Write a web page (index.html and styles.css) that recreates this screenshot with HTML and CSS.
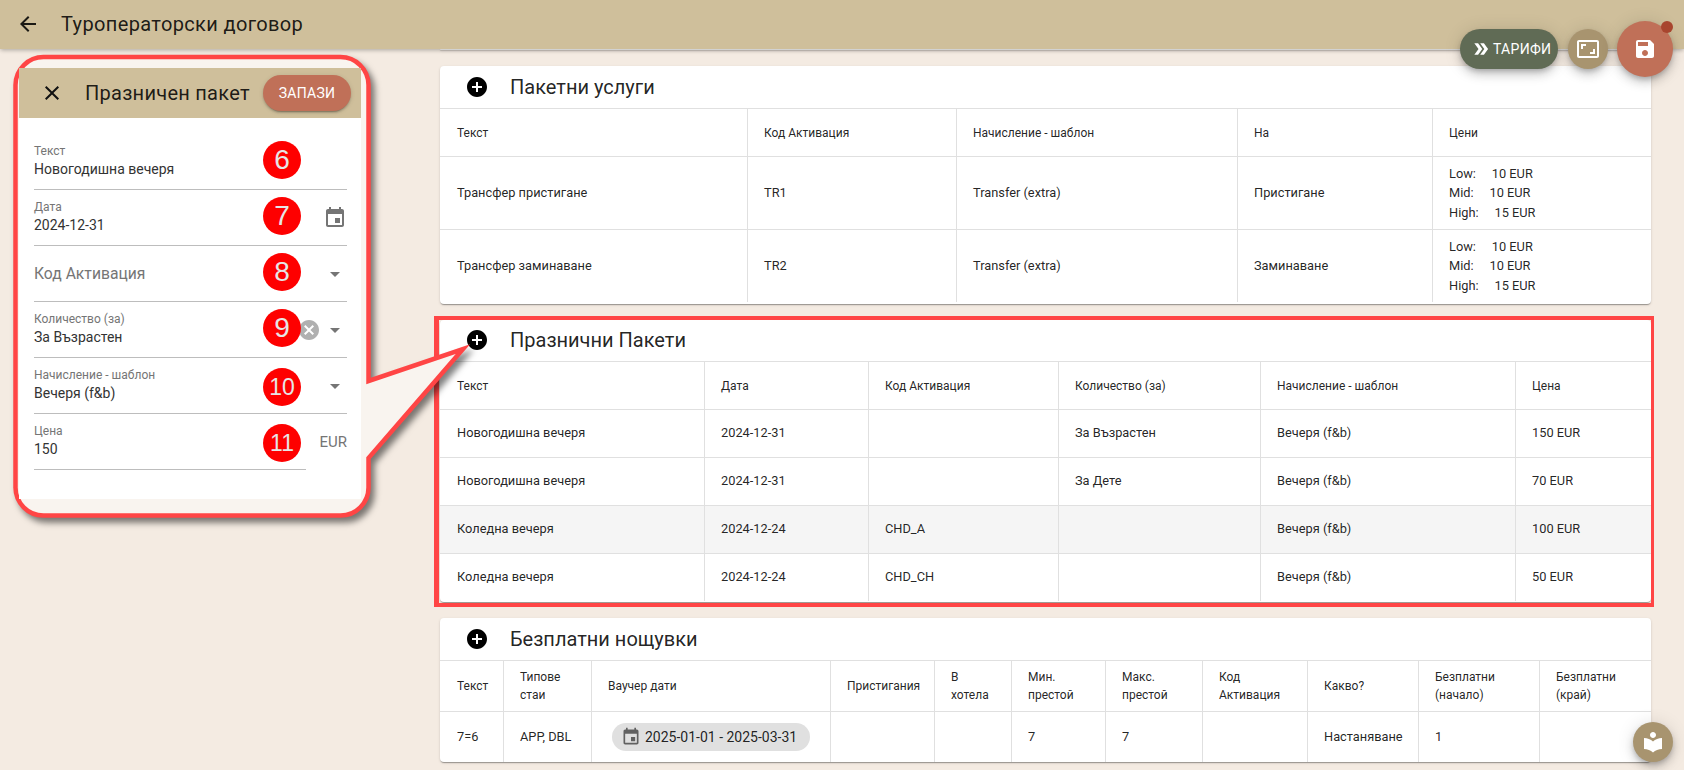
FILE: index.html
```html
<!DOCTYPE html>
<html lang="bg">
<head>
<meta charset="utf-8">
<title>Туроператорски договор</title>
<link rel="stylesheet" href="styles.css">
</head>
<body>
<div class="page">
  <header class="toolbar">
    <svg class="icon toolbar-back" viewBox="0 0 24 24"><path d="M20 11H7.83l5.59-5.59L12 4l-8 8 8 8 1.41-1.41L7.83 13H20v-2z"/></svg>
    <h1 class="toolbar-title">Туроператорски договор</h1>
  </header>

  <main class="content">
    <section class="card card-sliver"></section>

    <section class="card card-packages">
      <div class="card-head">
        <svg class="icon add" viewBox="0 0 24 24"><path d="M12 2C6.48 2 2 6.48 2 12s4.48 10 10 10 10-4.48 10-10S17.52 2 12 2zm5 11h-4v4h-2v-4H7v-2h4V7h2v4h4v2z"/></svg>
        <h2 class="card-title">Пакетни услуги</h2>
      </div>
      <table class="grid">
        <colgroup><col class="w307"><col class="w209"><col class="w281"><col class="w195"><col class="w219"></colgroup>
        <tr class="row-48 row-head"><td>Текст</td><td>Код Активация</td><td>Начисление - шаблон</td><td>На</td><td>Цени</td></tr>
        <tr class="row-73"><td>Трансфер пристигане</td><td>TR1</td><td>Transfer (extra)</td><td>Пристигане</td>
          <td class="prices">Low:&nbsp;&nbsp;&nbsp;&nbsp;&nbsp;10 EUR<br>Mid:&nbsp;&nbsp;&nbsp;&nbsp;&nbsp;10 EUR<br>High:&nbsp;&nbsp;&nbsp;&nbsp;&nbsp;15 EUR</td></tr>
        <tr class="row-73"><td>Трансфер заминаване</td><td>TR2</td><td>Transfer (extra)</td><td>Заминаване</td>
          <td class="prices">Low:&nbsp;&nbsp;&nbsp;&nbsp;&nbsp;10 EUR<br>Mid:&nbsp;&nbsp;&nbsp;&nbsp;&nbsp;10 EUR<br>High:&nbsp;&nbsp;&nbsp;&nbsp;&nbsp;15 EUR</td></tr>
      </table>
    </section>

    <section class="card card-holiday">
      <div class="card-head card-head-tight">
        <svg class="icon add" viewBox="0 0 24 24"><path d="M12 2C6.48 2 2 6.48 2 12s4.48 10 10 10 10-4.48 10-10S17.52 2 12 2zm5 11h-4v4h-2v-4H7v-2h4V7h2v4h4v2z"/></svg>
        <h2 class="card-title">Празнични Пакети</h2>
      </div>
      <table class="grid">
        <colgroup><col class="w264"><col class="w164"><col class="w190"><col class="w202"><col class="w255"><col class="w136"></colgroup>
        <tr class="row-48 row-head"><td>Текст</td><td>Дата</td><td>Код Активация</td><td>Количество (за)</td><td>Начисление - шаблон</td><td>Цена</td></tr>
        <tr class="row-48 row-data"><td>Новогодишна вечеря</td><td>2024-12-31</td><td></td><td>За Възрастен</td><td>Вечеря (f&amp;b)</td><td>150 EUR</td></tr>
        <tr class="row-48 row-data"><td>Новогодишна вечеря</td><td>2024-12-31</td><td></td><td>За Дете</td><td>Вечеря (f&amp;b)</td><td>70 EUR</td></tr>
        <tr class="row-48 row-data row-hover"><td>Коледна вечеря</td><td>2024-12-24</td><td>CHD_A</td><td></td><td>Вечеря (f&amp;b)</td><td>100 EUR</td></tr>
        <tr class="row-48 row-data"><td>Коледна вечеря</td><td>2024-12-24</td><td>CHD_CH</td><td></td><td>Вечеря (f&amp;b)</td><td>50 EUR</td></tr>
      </table>
    </section>

    <section class="card card-free">
      <div class="card-head">
        <svg class="icon add" viewBox="0 0 24 24"><path d="M12 2C6.48 2 2 6.48 2 12s4.48 10 10 10 10-4.48 10-10S17.52 2 12 2zm5 11h-4v4h-2v-4H7v-2h4V7h2v4h4v2z"/></svg>
        <h2 class="card-title">Безплатни нощувки</h2>
      </div>
      <table class="grid">
        <colgroup><col class="w63"><col class="w88"><col class="w239"><col class="w104"><col class="w77"><col class="w94"><col class="w97"><col class="w105"><col class="w111"><col class="w121"><col class="w112"></colgroup>
        <tr class="row-51 row-head"><td>Текст</td><td>Типове стаи</td><td>Ваучер дати</td><td>Пристигания</td><td>В хотела</td><td>Мин. престой</td><td>Макс. престой</td><td>Код Активация</td><td>Какво?</td><td>Безплатни (начало)</td><td>Безплатни (край)</td></tr>
        <tr class="row-51"><td>7=6</td><td>APP, DBL</td>
          <td><span class="chip"><svg class="icon chip-icon" viewBox="0 0 24 24"><path d="M17 12h-5v5h5v-5zM16 1v2H8V1H6v2H5c-1.11 0-1.99.9-1.99 2L3 19c0 1.1.89 2 2 2h14c1.1 0 2-.9 2-2V5c0-1.1-.9-2-2-2h-1V1h-2zm3 18H5V8h14v11z"/></svg>2025-01-01 - 2025-03-31</span></td>
          <td></td><td></td><td>7</td><td>7</td><td></td><td>Настаняване</td><td>1</td><td></td></tr>
      </table>
    </section>
  </main>

  <div class="fab-tariffs">
    <svg class="icon fab-tariffs-icon" viewBox="0 0 24 24"><path d="M15.5 5H11l5 7-5 7h4.5l5-7z"/><path d="M8.5 5H4l5 7-5 7h4.5l5-7z"/></svg>
    <span>ТАРИФИ</span>
  </div>
  <div class="fab-ratio">
    <svg class="icon fab-ratio-icon" viewBox="0 0 24 24"><path d="M19 12h-2v3h-3v2h5v-5zM7 9h3V7H5v5h2V9zm14-6H3c-1.1 0-2 .9-2 2v14c0 1.1.9 2 2 2h18c1.1 0 2-.9 2-2V5c0-1.1-.9-2-2-2zm0 16.01H3V4.99h18v14.02z"/></svg>
  </div>
  <div class="fab-save">
    <svg class="icon fab-save-icon" viewBox="0 0 24 24"><path d="M17 3H5c-1.11 0-2 .9-2 2v14c0 1.1.89 2 2 2h14c1.1 0 2-.9 2-2V7l-4-4zm-5 16c-1.66 0-3-1.34-3-3s1.34-3 3-3 3 1.34 3 3-1.34 3-3 3zm3-10H5V5h10v4z"/></svg>
    <span class="fab-dot"></span>
  </div>
  <div class="fab-help">
    <svg class="icon fab-help-icon" viewBox="0 0 24 24"><path d="M12 11.55C9.64 9.35 6.48 8 3 8v11c3.48 0 6.64 1.35 9 3.55 2.36-2.19 5.52-3.55 9-3.55V8c-3.48 0-6.64 1.35-9 3.55zM12 8c1.66 0 3-1.34 3-3s-1.34-3-3-3-3 1.34-3 3 1.34 3 3 3z"/></svg>
  </div>

  <svg class="bubble" viewBox="0 0 490 540">
    <path class="bubble-shape" d="M44 57H340a28 28 0 0 1 28.5 28V381L463 349L368.5 458V487a28 28 0 0 1-28.5 28.5H44A28 28 0 0 1 15.5 487V85A28 28 0 0 1 44 57Z"/>
  </svg>

  <aside class="panel">
    <div class="panel-head">
      <svg class="icon panel-close" viewBox="0 0 24 24"><path d="M19 6.41L17.59 5 12 10.59 6.41 5 5 6.41 10.59 12 5 17.59 6.41 19 12 13.41 17.59 19 19 17.59 13.41 12z"/></svg>
      <h2 class="panel-title">Празничен пакет</h2>
      <span class="panel-save">ЗАПАЗИ</span>
    </div>
    <div class="panel-body">
      <div class="field">
        <div class="field-text"><span class="field-label">Текст</span><span class="field-value">Новогодишна вечеря</span></div>
        <span class="badge">6</span>
      </div>
      <div class="field">
        <div class="field-text"><span class="field-label">Дата</span><span class="field-value">2024-12-31</span></div>
        <svg class="icon field-date" viewBox="0 0 24 24"><path d="M17 12h-5v5h5v-5zM16 1v2H8V1H6v2H5c-1.11 0-1.99.9-1.99 2L3 19c0 1.1.89 2 2 2h14c1.1 0 2-.9 2-2V5c0-1.1-.9-2-2-2h-1V1h-2zm3 18H5V8h14v11z"/></svg>
        <span class="badge">7</span>
      </div>
      <div class="field">
        <div class="field-placeholder">Код Активация</div>
        <div class="field-actions"><span class="caret"></span></div>
        <span class="badge">8</span>
      </div>
      <div class="field">
        <div class="field-text"><span class="field-label">Количество (за)</span><span class="field-value">За Възрастен</span></div>
        <div class="field-actions">
          <svg class="icon field-clear" viewBox="0 0 24 24"><path d="M12 2C6.47 2 2 6.47 2 12s4.47 10 10 10 10-4.47 10-10S17.53 2 12 2zm5 13.59L15.59 17 12 13.41 8.41 17 7 15.59 10.59 12 7 8.41 8.41 7 12 10.59 15.59 7 17 8.41 13.41 12 17 15.59z"/></svg>
          <span class="caret"></span>
        </div>
        <span class="badge">9</span>
      </div>
      <div class="field">
        <div class="field-text"><span class="field-label">Начисление - шаблон</span><span class="field-value">Вечеря (f&amp;b)</span></div>
        <div class="field-actions"><span class="caret"></span></div>
        <span class="badge badge-low badge-two">10</span>
      </div>
      <div class="field-row">
        <div class="field field-short">
          <div class="field-text"><span class="field-label">Цена</span><span class="field-value">150</span></div>
          <span class="badge badge-low badge-two">11</span>
        </div>
        <span class="field-suffix">EUR</span>
      </div>
    </div>
  </aside>
</div>
</body>
</html>
```

FILE: styles.css
```css
* { box-sizing: border-box; }
html, body { margin: 0; padding: 0; height: 100%; }
body {
  background: #f4ebe2;
  font-family: Roboto, "Liberation Sans", sans-serif;
  color: rgba(0, 0, 0, .87);
  overflow: hidden;
}
h1, h2 { margin: 0; font-weight: 400; }
.icon { display: block; width: 24px; height: 24px; fill: currentColor; flex: none; }

.page { position: relative; width: 1684px; height: 770px; overflow: hidden; }

/* toolbar */
.toolbar {
  position: relative;
  z-index: 2;
  height: 49px;
  background: #cfbf9b;
  display: flex;
  align-items: center;
  padding: 0 0 2px 16px;
  box-shadow: 0 2px 4px -1px rgba(0,0,0,.2), 0 1px 5px rgba(0,0,0,.12);
}
.toolbar-back { margin-right: 21px; }
.toolbar-title { font-size: 20px; line-height: 24px; letter-spacing: .36px; color: rgba(0,0,0,.87); }

/* content */
.content {
  display: flex;
  flex-direction: column;
  gap: 16px;
  padding: 0 33px 0 440px;
}
.card {
  position: relative;
  background: #fff;
  border-radius: 4px;
  box-shadow: 0 2px 1px -1px rgba(0,0,0,.2), 0 1px 1px 0 rgba(0,0,0,.14), 0 1px 3px 0 rgba(0,0,0,.12);
}
.card-sliver { height: 1px; z-index: 1; border-radius: 0 0 4px 4px; }
.card-packages { padding-bottom: 2px; }
.card-holiday { padding-bottom: 1px; }
.card-holiday::after {
  content: "";
  position: absolute;
  top: -4px; left: -6px; right: -3px; bottom: -5px;
  border: solid #ff4545;
  border-width: 4px 3px 4px 5px;
  pointer-events: none;
}
.card-head {
  height: 42px;
  display: flex;
  align-items: center;
  padding-left: 25px;
}
.card-head-tight { height: 41px; padding-bottom: 2px; }
.add { color: #000; margin-right: 21px; }
.card-title { font-size: 20px; line-height: 24px; color: rgba(0,0,0,.87); }

/* tables */
.grid {
  width: 1211px;
  table-layout: fixed;
  border-collapse: separate;
  border-spacing: 0;
  font-size: 12.8px;
  line-height: 18px;
}
.grid td {
  padding: 0 16px;
  border-top: 1px solid #e0e0e0;
  border-left: 1px solid #e0e0e0;
  vertical-align: middle;
}
.grid td:first-child { border-left: 0; padding-left: 17px; }
.row-48 td { height: 48px; }
.row-51 td { height: 51px; }
.row-73 td { height: 73px; }
.grid .row-head td { font-size: 12px; }
.grid .row-data td { padding-bottom: 2px; }
.row-hover td { background: #f5f5f5; }
.grid .prices { line-height: 19.5px; }

.w63 { width: 63px; } .w77 { width: 77px; } .w88 { width: 88px; }
.w94 { width: 94px; } .w97 { width: 97px; } .w104 { width: 104px; }
.w105 { width: 105px; } .w111 { width: 111px; } .w112 { width: 112px; }
.w121 { width: 121px; } .w136 { width: 136px; } .w164 { width: 164px; }
.w190 { width: 190px; } .w195 { width: 195px; } .w202 { width: 202px; }
.w209 { width: 209px; } .w219 { width: 219px; } .w239 { width: 239px; }
.w255 { width: 255px; } .w264 { width: 264px; } .w281 { width: 281px; }
.w307 { width: 307px; }

.chip {
  display: inline-flex;
  align-items: center;
  height: 28px;
  margin-left: 4px;
  padding: 0 13px 0 9px;
  border-radius: 14px;
  background: #e0e0e0;
  font-size: 14px;
  white-space: nowrap;
}
.chip-icon { width: 20px; height: 20px; margin-right: 4px; color: #616161; }

/* floating buttons */
.fab-tariffs {
  position: absolute;
  z-index: 3;
  left: 1460px; top: 29px;
  width: 98px; height: 40px;
  border-radius: 20px;
  background: #606b55;
  color: #fff;
  display: flex;
  align-items: center;
  padding-left: 11px;
  font-size: 14px;
  letter-spacing: .3px;
  box-shadow: 0 3px 5px -1px rgba(0,0,0,.2), 0 6px 10px rgba(0,0,0,.14), 0 1px 18px rgba(0,0,0,.12);
}
.fab-tariffs-icon { width: 20px; height: 20px; margin-right: 2px; }
.fab-ratio, .fab-help {
  position: absolute;
  z-index: 3;
  width: 40px; height: 40px;
  border-radius: 50%;
  background: #a8946f;
  color: #fff;
  display: flex;
  align-items: center;
  justify-content: center;
  box-shadow: 0 3px 5px -1px rgba(0,0,0,.2), 0 6px 10px rgba(0,0,0,.14), 0 1px 18px rgba(0,0,0,.12);
}
.fab-ratio { left: 1568px; top: 29px; }
.fab-help { left: 1633px; top: 722px; }
.fab-save {
  position: absolute;
  z-index: 3;
  left: 1617px; top: 21px;
  width: 56px; height: 56px;
  border-radius: 50%;
  background: #c07058;
  color: #fff;
  display: flex;
  align-items: center;
  justify-content: center;
  box-shadow: 0 3px 5px -1px rgba(0,0,0,.2), 0 6px 10px rgba(0,0,0,.14), 0 1px 18px rgba(0,0,0,.12);
}
.fab-dot {
  position: absolute;
  top: 0; right: 0;
  width: 12px; height: 12px;
  border-radius: 50%;
  background: #a8452e;
}

/* annotation bubble */
.bubble {
  position: absolute;
  z-index: 4;
  left: 0; top: 0;
  width: 490px; height: 540px;
  filter: drop-shadow(4px 5px 3px rgba(0,0,0,.5));
}
.bubble-shape { fill: #f9f4ef; stroke: #ff4545; stroke-width: 4.5; stroke-linejoin: miter; }

/* panel inside the bubble */
.panel {
  position: absolute;
  z-index: 5;
  left: 19px; top: 68px;
  width: 342px;
}
.panel-head {
  height: 50px;
  background: #cfbf9b;
  display: flex;
  align-items: center;
  padding: 0 10px 0 21px;
}
.panel-close { margin-right: 21px; color: #111; }
.panel-title { font-size: 20px; line-height: 24px; letter-spacing: .27px; color: rgba(0,0,0,.87); }
.panel-save {
  margin-left: auto;
  width: 88px; height: 36px;
  border-radius: 18px;
  background: #c07058;
  color: #fff;
  font-size: 14px;
  letter-spacing: .3px;
  display: flex;
  align-items: center;
  justify-content: center;
  box-shadow: 0 3px 1px -2px rgba(0,0,0,.2), 0 2px 2px rgba(0,0,0,.14), 0 1px 5px rgba(0,0,0,.12);
}
.panel-body {
  height: 381px;
  background: #fff;
  padding: 16px 14px 0 15px;
}
.field {
  position: relative;
  height: 56px;
  display: flex;
  border-bottom: 1px solid #bdbdbd;
}
.field-text { display: flex; flex-direction: column; padding-top: 10px; flex: 1; }
.field-label { font-size: 12px; line-height: 14px; color: #757575; }
.field-value { margin-top: 2px; font-size: 14px; line-height: 18px; color: #333; }
.field-placeholder { flex: 1; font-size: 15.7px; line-height: 56px; color: #757575; }
.field-date { margin-top: 16px; color: #757575; }
.field-actions { display: flex; align-items: center; height: 56px; }
.field-clear { width: 24px; height: 24px; color: #b0b0b0; margin-right: 2px; }
.caret {
  width: 24px;
  height: 5px;
  position: relative;
}
.caret::after {
  content: "";
  position: absolute;
  left: 7px; top: 0;
  border-style: solid;
  border-width: 5px 5px 0;
  border-color: #757575 transparent transparent;
}
.badge {
  position: absolute;
  left: 229px; top: 7px;
  width: 38px; height: 38px;
  border-radius: 50%;
  background: #fe0000;
  color: #e6e6e6;
  font-family: "Liberation Sans", Arial, sans-serif;
  font-size: 28px;
  line-height: 38px;
  text-align: center;
}
.badge-low { top: 10px; }
.badge-two { font-size: 23px; }
.field-row { display: flex; }
.field-short { width: 272px; }
.field-suffix { margin-left: auto; font-size: 15px; line-height: 18px; padding-top: 19px; color: #757575; }
```
